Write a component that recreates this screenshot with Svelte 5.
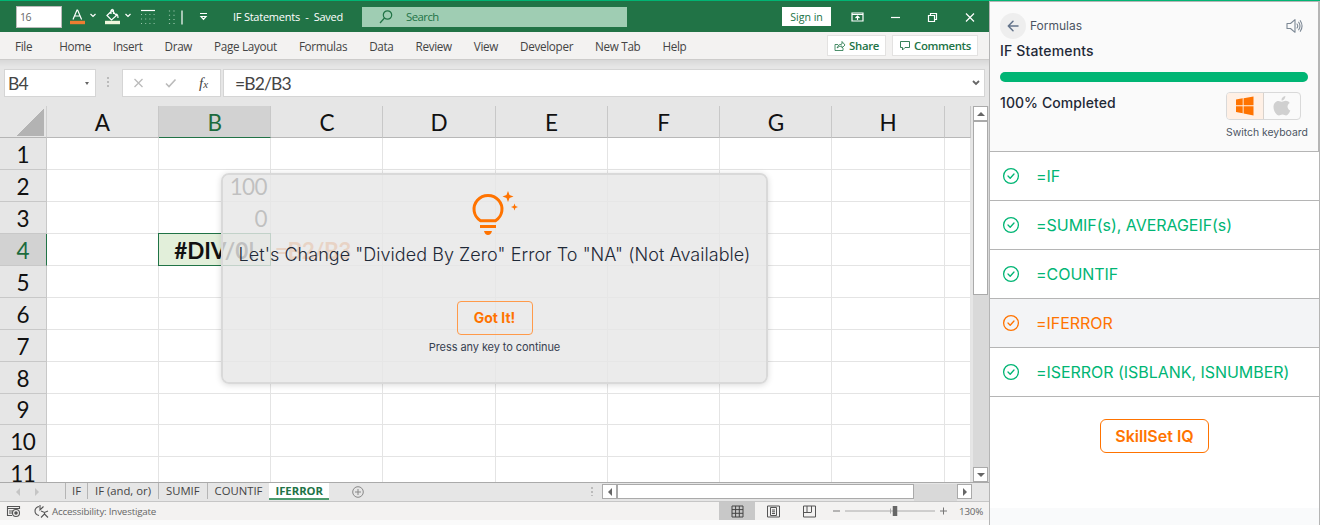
<script lang="ts">
	type Lesson = { title: string; active?: boolean };

	const menu = ['File', 'Home', 'Insert', 'Draw', 'Page Layout', 'Formulas', 'Data', 'Review', 'View', 'Developer', 'New Tab', 'Help'];
	const cols = ['A', 'B', 'C', 'D', 'E', 'F', 'G', 'H', ''];
	const rows = Array.from({ length: 11 }, (_, i) => i + 1);
	const cells: Record<string, string> = { B2: '100', B3: '0', B4: '#DIV/0!', C4: '=B2/B3' };
	const sheets = ['IF', 'IF (and, or)', 'SUMIF', 'COUNTIF', 'IFERROR'];
	const lessons: Lesson[] = [
		{ title: '=IF' },
		{ title: '=SUMIF(s), AVERAGEIF(s)' },
		{ title: '=COUNTIF' },
		{ title: '=IFERROR', active: true },
		{ title: '=ISERROR (ISBLANK, ISNUMBER)' },
	];

	let selected = $state('B4');
	let sheet = $state('IFERROR');
	let showHint = $state(true);
	let progress = $state(100);
</script>

<svelte:window onkeydown={() => (showHint = false)} />

<div class="app">
	<main class="excel">
		<header class="titlebar">
			<div class="font-size">16</div>
			<svg class="tools" width="171" height="31" viewBox="2 0 171 31" fill="none" stroke="#fff" stroke-width="1.2">
				<path d="M13 18.5 17 9h.6l4 9.5M14.5 15h5.8" />
				<path d="M10 21.500h15" stroke="#ed7d31" stroke-width="3.4" />
				<path d="m30.500 13 2.500 2.500 2.500-2.500" />
				<path d="m47 14.500 5-5 4.500 5-5 4.500zM51 13V9.500q1.500-2.500 2.500 0V13M56 13q2 0 2 4" />
				<path d="M45 21.500h15" stroke="#eef7dc" stroke-width="3.400" />
				<path d="m65.500 13 2.500 2.500 2.500-2.500" />
				<path d="M81 9.500h14" />
				<path d="M81 13.500h14M81 18h14M81 22.500h14" stroke="#9cc7ad" stroke-dasharray="1 3.200" />
				<path d="M109.500 9.500v14M114 9.500v14" stroke="#9cc7ad" stroke-dasharray="1 3.200" />
				<path d="M122 9.500v14" />
				<path d="M140 12.500h7M141 15.500h5l-2.500 2.800z" />
			</svg>
			<div class="doc-name">IF Statements &nbsp;-&nbsp; Saved</div>
			<div class="search">
				<svg width="16" height="16" viewBox="0 0 16 16" fill="none" stroke="#217346" stroke-width="1.200">
					<circle cx="9.500" cy="6" r="4.200" />
					<path d="M6.500 9 2 14" />
				</svg>
				<span>Search</span>
			</div>
			<button class="sign-in">Sign in</button>
			<svg class="window-icons" width="124" height="16" viewBox="0 0 124 16" fill="none" stroke="#fff" stroke-width="1.200">
				<path d="M1 4h11v8H1zM1 5.500h11M6.500 11V7M4.500 9l2-2 2 2" />
				<path d="M40 8.500h9" />
				<path d="M77.500 6.500h6v6h-6zM79.500 6V4.500h6v6H84" />
				<path d="m115 4.500 8 8m0-8-8 8" />
			</svg>
		</header>

		<nav class="menu">
			{#each menu as item}
				<span>{item}</span>
			{/each}
			<button class="share">
				<svg width="12" height="12" viewBox="0 0 12 12" fill="none" stroke="#217346" stroke-width=".8"><path d="M4 4.500H1v6h8V8M3 8q1-4 5-4V1.500L11 5 8 8V6Q5 6 3 8z" /></svg>
				Share
			</button>
			<button class="comments">
				<svg width="12" height="12" viewBox="0 0 12 12" fill="none" stroke="#217346" stroke-width=".9"><path d="M1.500 1.500h9v6H6L3.500 10V7.500h-2z" /></svg>
				Comments
			</button>
		</nav>

		<div class="formula-row">
			<div class="name-box">{selected}<i class="caret"></i></div>
			<div class="dots"></div>
			<div class="fx-box">
				<svg width="32" height="14" viewBox="0 0 32 14" fill="none" stroke="#bbb" stroke-width="1.300"><path d="m1.500 3 8 8m0-8-8 8" /></svg>
				<svg class="tick" width="12" height="14" viewBox="0 0 12 14" fill="none" stroke="#bbb" stroke-width="1.600"><path d="m1 7.500 3 3 6.500-7" /></svg>
				<em>f<small>x</small></em>
			</div>
			<div class="formula">
				<span>=B2/B3</span>
				<svg width="8" height="6" viewBox="0 0 8 6" fill="none" stroke="#666" stroke-width="1.800"><path d="m1 1 3 3 3-3" /></svg>
			</div>
		</div>

		<div class="sheet-area">
			<div class="grid">
				<div class="corner"></div>
				{#each cols as col}
					<div class="col-head" class:current={selected[0] === col}>{col}</div>
				{/each}
				{#each rows as row}
					<div class="row-head" class:current={selected.slice(1) === String(row)}>{row}</div>
					{#each cols as col}
						<div
							class="cell"
							class:selected={selected === col + row}
							class:note={col + row === 'C4'}
						>{cells[col + row] ?? ''}</div>
					{/each}
				{/each}
			</div>
			<div class="vscroll">
				<div class="arrow"><i class="up"></i></div>
				<div class="vthumb"></div>
				<div class="arrow last"><i class="down"></i></div>
			</div>
		</div>

		<div class="tabs">
			<div class="tab-nav"><i class="left"></i><i class="right"></i></div>
			{#each sheets as name}
				<button class="tab" class:active={sheet === name} onclick={() => (sheet = name)}>{name}</button>
			{/each}
			<svg class="plus" width="12" height="12" viewBox="0 0 12 12" fill="none" stroke="#888"><circle cx="6" cy="6" r="5.300" /><path d="M6 3v6M3 6h6" /></svg>
			<div class="hscroll">
				<div class="dots small"></div>
				<div class="arrow"><i class="left"></i></div>
				<div class="hthumb"></div>
				<div class="track"></div>
				<div class="arrow"><i class="right"></i></div>
			</div>
		</div>

		<footer class="status">
			<svg width="44" height="16" viewBox="0 0 44 16" fill="none" stroke="#555" stroke-width="1.100">
				<path d="M6 12.500H1.500v-9h12V6M1.500 5.500h12M3 8h4M3 10h3" />
				<circle cx="10" cy="10" r="3.500" /><circle cx="10" cy="10" r="1.200" fill="#555" />
				<path d="M33 3.500q-4 1-4 4.500t4 4.500M34 2v5l3.500-3.500M35 8l3.500 1.500L42 8M38.500 9.500V11L35 14.500M38.500 11l3.500 3.500" />
			</svg>
			<span>Accessibility: Investigate</span>
			<div class="views">
				<div class="view on">
					<svg width="13" height="13" viewBox="0 0 13 13" fill="none" stroke="#444"><path d="M1 1h11v11H1zM1 4.600h11M1 8.300h11M4.600 1v11M8.300 1v11" /></svg>
				</div>
				<div class="view">
					<svg width="13" height="13" viewBox="0 0 13 13" fill="none" stroke="#555"><path d="M.500 1h12v11H.500zM3.500 2.500h6v8h-6zM5 5h3M5 6.800h3M5 8.500h3" /></svg>
				</div>
				<div class="view">
					<svg width="13" height="13" viewBox="0 0 13 13" fill="none" stroke="#555"><path d="M.500 1h12v11H.500zM4 1v6M8.500 1v6M.500 7.500h8" /></svg>
				</div>
			</div>
			<svg class="zoom" width="116" height="16" viewBox="0 0 116 16" stroke="#777" fill="none">
				<path d="M1 8h7M108 8h7M111.500 4.500v7" />
				<path d="M13 8h90" stroke="#aaa" />
				<path d="M58.500 5.500v5" stroke="#aaa" />
				<path d="M63 3v10" stroke="#666" stroke-width="4.500" />
			</svg>
			<span class="percent">130%</span>
		</footer>

		{#if showHint}
			<div class="hint" role="dialog">
				<svg class="bulb" width="48" height="46" viewBox="0 0 48 46" fill="none" stroke="#ff7300" stroke-width="3">
					<path d="M10.500 30.700a14 13.700 0 1 1 15 0zM10 36.500h16" />
					<path d="M14 41h8q-1 4-4 4t-4-4zM38 1l1.500 4L43.500 6.500l-4 1.500L38 12l-1.500-4-4-1.500 4-1.500zM44.500 13.500l.9 2.600 2.600.900-2.600.900-.900 2.600-.900-2.600-2.600-.900 2.600-.900z" fill="#ff7300" stroke="none" />
				</svg>
				<div class="hint-title">Let's Change "Divided By Zero" Error To "NA" (Not Available)</div>
				<button class="got-it" onclick={() => (showHint = false)}>Got It!</button>
				<div class="hint-foot">Press any key to continue</div>
			</div>
		{/if}
	</main>

	<aside class="side">
		<div class="side-head">
			<div class="crumb">
				<button class="back" aria-label="Back">
					<svg width="12" height="12" viewBox="0 0 12 12" fill="none" stroke="#64748b" stroke-width="1.500" stroke-linecap="round" stroke-linejoin="round"><path d="M11 6H1.300M6 1.300 1.300 6 6 10.700" /></svg>
				</button>
				<span>Formulas</span>
				<svg class="sound" width="17" height="16" viewBox="0 0 17 16" fill="none" stroke="#7b8794" stroke-width="1.100" stroke-linejoin="round" stroke-linecap="round">
					<path d="M1 5.500h3.500L9 1.700v12.600L4.500 10.500H1zM11 6q1.500 2 0 4M12.700 4.200q2.600 3.800 0 7.600M14.300 2.700q3.500 5.300 0 10.600" />
				</svg>
			</div>
			<h1>IF Statements</h1>
			<div class="bar"><div class="fill" style="width: {progress}%"></div></div>
			<div class="done-row">
				<strong>{progress}% Completed</strong>
				<div class="keyboard">
					<div class="os">
						<div class="win">
							<svg width="18" height="20" viewBox="0 0 18 20" fill="#ff7300"><path d="M0 3.500 6.700 2.300V9.200H0zM7.600 2.200 17.500.500v8.700H7.600zM0 10.200h6.700v7L0 16zM7.600 10.200h9.900v9.300l-9.900-1.900z" /></svg>
						</div>
						<div class="mac">
							<svg width="18" height="20" viewBox="0 0 18 20" fill="#d0d0d0"><path d="M12.300 0c.2 2.500-1.700 4.500-3.800 4.500C8.200 2.200 10.200.300 12.300 0zM9 5.700c1 0 2.100-.9 3.800-.9 1.500 0 3 .7 3.900 2.100-3.200 2-2.700 6.200.6 7.500-.8 2.300-2.500 5-4.200 5-1.300 0-1.900-.8-3.600-.8s-2.300.8-3.600.8C3.500 19.400.500 15 .500 11c0-3.800 2.300-6.100 4.900-6.100 1.500 0 2.700.8 3.600.8z" /></svg>
						</div>
					</div>
					<span>Switch keyboard</span>
				</div>
			</div>
		</div>
		<ul class="lessons">
			{#each lessons as lesson}
				<li class:active={lesson.active}>
					<svg width="18" height="18" viewBox="0 0 18 18" fill="none" stroke="currentColor" stroke-width="1.300" stroke-linecap="round" stroke-linejoin="round">
						<circle cx="9" cy="9" r="7.400" />
						<path d="m6 9 2.200 2.200L12 7" />
					</svg>
					{lesson.title}
				</li>
			{/each}
		</ul>
		<div class="iq-area"><button class="iq">SkillSet IQ</button></div>
	</aside>
</div>

<style>
	:global(body) {
		overflow: hidden;
		background: #f9fafb;
	}
	* { box-sizing: border-box; }
	button {
		font-family: inherit;
		cursor: pointer;
	}
	.app {
		display: flex;
		height: 525px;
		border-top: 1px solid #00b574;
		font-family: Inter, sans-serif;
	}
	.excel {
		position: relative;
		width: 989px;
		display: flex;
		flex-direction: column;
		background: #fafafa;
		font-family: 'Open Sans', sans-serif;
		color: #444;
	}
	.titlebar {
		height: 31px;
		flex: none;
		display: flex;
		align-items: center;
		background: #217346;
		color: #fff;
		font-size: 11px;
	}
	.font-size {
		width: 46px;
		height: 22px;
		margin-left: 16px;
		padding-left: 3px;
		line-height: 21px;
		font-size: 10.5px;
		letter-spacing: -0.4px;
		color: #666;
		background: #fff;
		border: 1px solid #bbb;
	}
	.tools { flex: none; }
	.doc-name {
		width: 129px;
		padding-bottom: 1px;
		font-size: 11px;
		letter-spacing: -0.24px;
		white-space: nowrap;
	}
	.search {
		width: 265px;
		height: 20px;
		padding-left: 16px;
		display: flex;
		align-items: center;
		gap: 12px;
		background: #9fcdb3;
		color: #217346;
		font-size: 11.3px;
		letter-spacing: -0.5px;
	}
	.search span { padding-bottom: 1px; }
	.sign-in {
		width: 49px;
		height: 19px;
		margin-left: 155px;
		padding: 0;
		border: none;
		background: #fff;
		color: #217346;
		font-size: 10.6px;
	}
	.window-icons { margin-left: 20px; }

	.menu {
		height: 28px;
		flex: none;
		display: flex;
		align-items: center;
		gap: 22px;
		padding-left: 15px;
		background: #f3f2f1;
		border-bottom: 1px solid #cdcccb;
		font-size: 11.7px;
		letter-spacing: -0.32px;
		white-space: nowrap;
	}
	.menu span:first-child { margin-right: 5px; }
	.share,
	.comments {
		height: 21px;
		padding: 0;
		display: flex;
		align-items: center;
		justify-content: center;
		gap: 3px;
		border: 1px solid #e3e2e1;
		background: #fff;
		color: #217346;
		font-size: 11.4px;
		font-weight: 600;
		letter-spacing: -0.35px;
	}
	.share {
		width: 59px;
		margin-left: auto;
		margin-right: -16px;
	}
	.comments {
		width: 86px;
		margin-right: 11px;
	}

	.formula-row {
		height: 46px;
		flex: none;
		display: flex;
		padding: 9px 4px 9px;
		background: linear-gradient(#d8d8d8, #e6e6e6 7px);
		font-family: Lato, sans-serif;
		font-size: 17.5px;
		letter-spacing: -0.85px;
	}
	.name-box,
	.fx-box,
	.formula {
		display: flex;
		align-items: center;
		background: #fff;
		border: 1px solid #d5d5d5;
	}
	.name-box {
		width: 92px;
		padding: 0 6px 0 3px;
		justify-content: space-between;
	}
	i {
		display: block;
		width: 0;
		height: 0;
		border: 4px solid transparent;
	}
	i.caret {
		border-width: 3px 2.5px 0;
		border-top-color: #666;
	}
	i.up { border-width: 0 4px 4px; border-bottom-color: #666; }
	i.down { border-width: 4px 4px 0; border-top-color: #666; }
	i.left { border-width: 4px 4px 4px 0; border-right-color: #666; }
	i.right { border-width: 4px 0 4px 4px; border-left-color: #666; }
	.dots {
		width: 2px;
		height: 11px;
		margin: 8px 13px 0 11px;
		background: repeating-linear-gradient(#bbb 0 2px, transparent 2px 4px);
	}
	.fx-box {
		width: 99px;
		padding-left: 10px;
	}
	.fx-box .tick { margin-right: 22px; }
	.fx-box em {
		font-family: 'Liberation Serif', serif;
		font-size: 15px;
		letter-spacing: 0;
	}
	.fx-box small { font-size: 11px; }
	.formula {
		flex: 1;
		margin-left: 2px;
		padding: 0 4px 0 11px;
		justify-content: space-between;
	}

	.sheet-area {
		height: 377px;
		flex: none;
		display: flex;
		background: #e6e6e6;
		border-bottom: 1px solid #aaa;
	}
	.grid {
		width: 971px;
		height: 376px;
		display: grid;
		grid-template-columns: 46.5px repeat(8, 112.25px) 1fr;
		grid-template-rows: 32px;
		grid-auto-rows: 31.95px;
		overflow: hidden;
		font-family: Lato, sans-serif;
		font-size: 22.5px;
		letter-spacing: -0.6px;
		color: #111;
	}
	.corner {
		border-right: 1px solid #cfcfcf;
		border-bottom: 1px solid #b5b5b5;
		background: linear-gradient(135deg, transparent 50%, #b3b3b3 50%) 16px 2px / 28px 28px no-repeat;
	}
	.col-head,
	.row-head {
		display: flex;
		align-items: center;
		justify-content: center;
		background: #e6e6e6;
		border-right: 1px solid #c8c8c8;
		border-bottom: 1px solid #b8b8b8;
	}
	.col-head { padding-top: 2px; }
	.row-head {
		padding-top: 2px;
		border-bottom-color: #c8c8c8;
	}
	.col-head.current,
	.row-head.current {
		background: #d2d2d2;
		color: #1c6b3e;
	}
	.col-head.current { border-bottom-color: #217346; }
	.row-head.current { border-right-color: #217346; }
	.cell {
		padding: 2px 3px 0 0;
		line-height: 29px;
		text-align: right;
		background: #fff;
		border-right: 1px solid #e4e4e4;
		border-bottom: 1px solid #e4e4e4;
	}
	.cell.selected {
		margin: -1px 0 0 -1px;
		padding: 2px 0 0;
		text-align: center;
		font-weight: 700;
		letter-spacing: -0.1px;
		background: #e2efda;
		border: 1px solid #217346;
		outline: 1px solid rgba(33, 115, 70, 0.4);
		outline-offset: -1px;
	}
	.cell.note {
		padding: 2px 0 0 4px;
		text-align: left;
		font-weight: 700;
		color: #ed7d31;
	}
	.vscroll {
		width: 16px;
		margin-left: 2px;
		display: flex;
		flex-direction: column;
		background: #d9d9d9;
	}
	.arrow {
		width: 15px;
		height: 15px;
		flex: none;
		display: flex;
		align-items: center;
		justify-content: center;
		background: #fff;
		border: 1px solid #aaa;
	}
	.vthumb {
		width: 15px;
		height: 174px;
		background: #fff;
		border: 1px solid #aaa;
	}
	.arrow.last { margin-top: auto; }

	.tabs {
		height: 19px;
		flex: none;
		display: flex;
		background: #e6e6e6;
		border-bottom: 1px solid #c6c6c6;
	}
	.tab-nav {
		width: 65px;
		display: flex;
		gap: 15px;
		padding: 5px 0 0 16px;
		opacity: 0.25;
	}
	.tab {
		height: 16px;
		padding: 0 7px;
		border: none;
		border-left: 1px solid #b5b5b5;
		background: none;
		color: #444;
		font-size: 11.3px;
		letter-spacing: 0;
		line-height: 14px;
		white-space: nowrap;
	}
	.tab-nav + .tab { padding: 0 6px; }
	.tab.active {
		height: 17px;
		padding: 0 6px;
		border-left: none;
		border-bottom: 2px solid #4b9b6e;
		background: #fff;
		color: #217346;
		font-weight: 700;
	}
	.plus { margin: 3px 0 0 23px; }
	.hscroll {
		margin-left: auto;
		padding: 1px 17px 0 0;
		display: flex;
	}
	.dots.small {
		height: 9px;
		margin: 3px 9px 0 0;
	}
	.hthumb {
		width: 297px;
		height: 15px;
		background: #fff;
		border: 1px solid #aaa;
	}
	.track {
		width: 43px;
		background: #d9d9d9;
	}

	.status {
		height: 18px;
		flex: none;
		display: flex;
		align-items: center;
		padding-left: 6px;
		background: #f3f2f1;
		color: #666;
		font-size: 9.8px;
		letter-spacing: -0.2px;
	}
	.status > span { margin-left: 2px; }
	.views {
		display: flex;
		margin-left: auto;
	}
	.view {
		width: 36px;
		height: 18px;
		display: flex;
		align-items: center;
		justify-content: center;
	}
	.view.on { background: #c8c8c8; }
	.zoom { margin-left: 5px; }
	.status .percent {
		width: 24px;
		margin: 0 6px 0 11px;
	}

	.hint {
		position: absolute;
		left: 221px;
		top: 172px;
		width: 547px;
		height: 211px;
		display: flex;
		flex-direction: column;
		align-items: center;
		padding-top: 15px;
		background: rgba(230, 230, 230, 0.82);
		background-clip: padding-box;
		border: 2px solid #d9d9d9;
		border-radius: 8px;
		box-shadow: 0 1px 6px rgba(0, 0, 0, 0.15);
		font-family: Inter, sans-serif;
		color: #1f2937;
	}
	.bulb {
		flex: none;
		margin-right: 2px;
	}
	.hint-title {
		margin-top: 5px;
		font-size: 18px;
		font-weight: 300;
		line-height: 27px;
		letter-spacing: 0.05px;
		white-space: nowrap;
	}
	.got-it {
		width: 76px;
		height: 34px;
		margin-top: 33px;
		padding: 0 0 1px;
		border: 1px solid #ff9a4a;
		border-radius: 4px;
		background: none;
		color: #ff7300;
		font-size: 14px;
		font-weight: 700;
	}
	.hint-foot {
		margin-top: 4px;
		font-size: 11px;
		letter-spacing: -0.08px;
		line-height: 17px;
		color: #374151;
	}

	.side {
		width: 331px;
		display: flex;
		flex-direction: column;
		border-left: 1px solid #b5b5b5;
		border-right: 1px solid #b5b5b5;
		background: #f9fafb;
		color: #1f2937;
	}
	.side-head {
		height: 151px;
		flex: none;
		padding: 12px 10px 0;
		background: #fafafa;
		border: solid #b5b5b5;
		border-width: 1px 1px 1px 0;
	}
	.crumb {
		display: flex;
		align-items: center;
		gap: 4px;
		height: 24px;
		font-size: 12px;
		letter-spacing: 0;
		color: #4b5563;
	}
	.crumb span { padding-bottom: 1px; }
	.back {
		width: 26px;
		height: 26px;
		padding: 0;
		display: flex;
		align-items: center;
		justify-content: center;
		border: none;
		border-radius: 50%;
		background: #eee;
	}
	.sound { margin: 0 5px 0 auto; }
	h1,
	strong {
		margin: 0;
		font-size: 14px;
		font-weight: 500;
		line-height: 20px;
		letter-spacing: 0.15px;
	}
	h1 { margin-top: 3px; }
	.bar {
		height: 10px;
		margin-top: 11px;
		border-radius: 5px;
		background: #e5e7eb;
	}
	.fill {
		height: 100%;
		border-radius: 5px;
		background: #00b574;
	}
	.done-row {
		display: flex;
		justify-content: space-between;
		margin-top: 10px;
	}
	.done-row strong {
		margin-top: 1px;
		letter-spacing: 0.08px;
	}
	.keyboard {
		width: 82px;
		font-size: 10.4px;
		white-space: nowrap;
		color: #4b5563;
	}
	.keyboard span {
		display: block;
		margin-top: 5px;
		line-height: 16px;
	}
	.os {
		width: 75px;
		height: 28px;
		display: flex;
		border: 1px solid #d9d9d9;
		border-radius: 4px;
		overflow: hidden;
	}
	.win,
	.mac {
		flex: 1;
		display: flex;
		align-items: center;
		justify-content: center;
	}
	.win {
		background: #fff0e5;
		border-right: 1px solid #d9d2cc;
	}
	.lessons {
		margin: 0;
		padding: 0;
		list-style: none;
		background: #fff;
	}
	.lessons li {
		height: 49px;
		display: flex;
		align-items: center;
		gap: 16px;
		padding-left: 12px;
		border-bottom: 1px solid #b5b5b5;
		color: #00b574;
		font-size: 16px;
		letter-spacing: -0.04px;
		white-space: nowrap;
	}
	.lessons li.active {
		background: #f3f4f6;
		color: #ff7300;
	}
	.iq-area {
		height: 111px;
		padding-top: 22px;
		text-align: center;
		background: #fff;
	}
	.iq {
		width: 109px;
		height: 34px;
		padding: 0;
		border: 1px solid #ff7300;
		border-radius: 6px;
		background: #fff;
		color: #ff7300;
		font-size: 16px;
		font-weight: 600;
	}
</style>
